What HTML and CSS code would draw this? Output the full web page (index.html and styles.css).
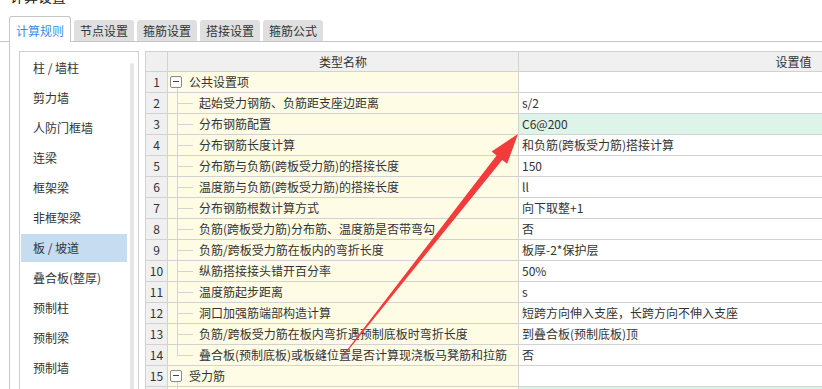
FILE: index.html
```html
<!DOCTYPE html>
<html lang="zh-CN">
<head>
    <meta charset="UTF-8">
    <meta name="viewport" content="width=device-width, initial-scale=1.0">
    <title>计算设置</title>
    <link rel="stylesheet" href="styles.css">
</head>
<body>
    <div class="title">计算设置</div>

    <div class="tabs">
        <div class="tab active">计算规则</div>
        <div class="tab">节点设置</div>
        <div class="tab">箍筋设置</div>
        <div class="tab">搭接设置</div>
        <div class="tab">箍筋公式</div>
    </div>

    <div class="panel">
        <div class="side">
            <ul class="side-list">
                <li>柱 / 墙柱</li>
                <li>剪力墙</li>
                <li>人防门框墙</li>
                <li>连梁</li>
                <li>框架梁</li>
                <li>非框架梁</li>
                <li class="selected">板 / 坡道</li>
                <li>叠合板(整厚)</li>
                <li>预制柱</li>
                <li>预制梁</li>
                <li>预制墙</li>
            </ul>
            <div class="side-scroll"></div>
        </div>

        <div class="sheet">
            <div class="row head">
                <div class="cell num"></div>
                <div class="cell">类型名称</div>
                <div class="cell">设置值</div>
            </div>
            <div class="row">
                <div class="cell num">1</div>
                <div class="cell name group"><span class="toggle"></span>公共设置项</div>
                <div class="cell val"></div>
            </div>
            <div class="row">
                <div class="cell num">2</div>
                <div class="cell name leaf">起始受力钢筋、负筋距支座边距离</div>
                <div class="cell val">s/2</div>
            </div>
            <div class="row">
                <div class="cell num">3</div>
                <div class="cell name leaf">分布钢筋配置</div>
                <div class="cell val current">C6@200</div>
            </div>
            <div class="row">
                <div class="cell num">4</div>
                <div class="cell name leaf">分布钢筋长度计算</div>
                <div class="cell val">和负筋(跨板受力筋)搭接计算</div>
            </div>
            <div class="row">
                <div class="cell num">5</div>
                <div class="cell name leaf">分布筋与负筋(跨板受力筋)的搭接长度</div>
                <div class="cell val">150</div>
            </div>
            <div class="row">
                <div class="cell num">6</div>
                <div class="cell name leaf">温度筋与负筋(跨板受力筋)的搭接长度</div>
                <div class="cell val">ll</div>
            </div>
            <div class="row">
                <div class="cell num">7</div>
                <div class="cell name leaf">分布钢筋根数计算方式</div>
                <div class="cell val">向下取整+1</div>
            </div>
            <div class="row">
                <div class="cell num">8</div>
                <div class="cell name leaf">负筋(跨板受力筋)分布筋、温度筋是否带弯勾</div>
                <div class="cell val">否</div>
            </div>
            <div class="row">
                <div class="cell num">9</div>
                <div class="cell name leaf">负筋/跨板受力筋在板内的弯折长度</div>
                <div class="cell val">板厚-2*保护层</div>
            </div>
            <div class="row">
                <div class="cell num">10</div>
                <div class="cell name leaf">纵筋搭接接头错开百分率</div>
                <div class="cell val">50%</div>
            </div>
            <div class="row">
                <div class="cell num">11</div>
                <div class="cell name leaf">温度筋起步距离</div>
                <div class="cell val">s</div>
            </div>
            <div class="row">
                <div class="cell num">12</div>
                <div class="cell name leaf">洞口加强筋端部构造计算</div>
                <div class="cell val">短跨方向伸入支座，长跨方向不伸入支座</div>
            </div>
            <div class="row">
                <div class="cell num">13</div>
                <div class="cell name leaf">负筋/跨板受力筋在板内弯折遇预制底板时弯折长度</div>
                <div class="cell val">到叠合板(预制底板)顶</div>
            </div>
            <div class="row">
                <div class="cell num">14</div>
                <div class="cell name leaf last">叠合板(预制底板)或板缝位置是否计算现浇板马凳筋和拉筋</div>
                <div class="cell val">否</div>
            </div>
            <div class="row">
                <div class="cell num">15</div>
                <div class="cell name group"><span class="toggle"></span>受力筋</div>
                <div class="cell val"></div>
            </div>
            <div class="row">
                <div class="cell num"></div>
                <div class="cell name leaf"></div>
                <div class="cell val next"></div>
            </div>
        </div>
    </div>

    <!-- annotation arrow drawn over the screenshot -->
    <svg class="arrow" width="822" height="389" viewBox="0 0 822 389">
        <polygon points="342.6,355.7 496.6,155.4 491.6,151.4 518,134 507.2,163.8 502.2,159.9 343.4,356.3" fill="#f23c3c"/>
    </svg>
</body>
</html>
```

FILE: styles.css
```css
* {
    margin: 0;
    padding: 0;
    box-sizing: border-box;
    font-family: "Noto Sans CJK SC", "Microsoft YaHei", sans-serif;
}

body {
    position: relative;
    width: 822px;
    height: 389px;
    overflow: hidden;
    background: #fff;
    color: #333;
    font-size: 12px;
}

.title {
    height: 16px;
    margin: -12px 0 12px;
    padding-left: 10px;
    font-size: 14px;
    line-height: 16px;
    color: #222;
}

/* tab bar */
.tabs {
    display: flex;
    align-items: flex-end;
    gap: 3px;
    height: 26px;
    padding-left: 9px;
    border-bottom: 1px solid #c6c6c6;
}

.tab {
    width: 60px;
    height: 21px;
    line-height: 21px;
    text-align: center;
    background: #dfdfdf;
    border-radius: 3px 3px 0 0;
    color: #333;
}

.tab.active {
    width: 62px;
    height: 26px;
    margin-bottom: -1px;
    padding-top: 3px;
    line-height: 22px;
    background: #fff;
    border: 1px solid #c6c6c6;
    border-bottom: none;
    color: #3a8ee6;
}

/* body of the dialog */
.panel {
    display: flex;
    gap: 6px;
    height: 347px;
    margin-left: 9px;
    padding: 9px 0 0 9px;
    border-left: 1px solid #c8c8c8;
}

.side {
    flex: none;
    display: flex;
    width: 120px;
    border: 1px solid #cfcfcf;
    border-bottom: none;
    background: #fff;
}

.side-list {
    flex: 1;
    list-style: none;
    padding: 1px 1px 0 1px;
}

.side-list li {
    height: 28px;
    margin: 1px 0 2px;
    padding-left: 12px;
    line-height: 28px;
    color: #333;
}

.side-list li.selected {
    background: #c5dcf1;
}

.side-scroll {
    flex: none;
    width: 4px;
    margin: 11px 4px 0 2px;
    background: #e6e6e6;
    border-radius: 2px 2px 0 0;
}

/* settings grid */
.sheet {
    flex: none;
    width: 924px;
    border-left: 1px solid #d2d2d2;
    border-top: 1px solid #d2d2d2;
}

.row {
    display: grid;
    grid-template-columns: 22px 351px 550px;
    height: 21px;
}

.cell {
    border-right: 1px solid #d2d2d2;
    border-bottom: 1px solid #d2d2d2;
    line-height: 20px;
    white-space: nowrap;
    overflow: hidden;
}

.head {
    height: 20px;
    background: #f0f0f0;
}

.head .cell {
    line-height: 19px;
    text-align: center;
}

.num {
    background: #f0f0f0;
    text-align: center;
}

.name {
    padding-left: 31px;
    background: #fffce6;
}

.name.group {
    display: flex;
    align-items: center;
    gap: 7px;
    padding-left: 2px;
    background:
        linear-gradient(#d4d4d4, #d4d4d4) 9px 16px / 1px 4px no-repeat,
        #fffce6;
}

.toggle {
    position: relative;
    width: 12px;
    height: 12px;
    border: 1px solid #8a8a8a;
    border-radius: 2px;
    background: #fff;
}

.toggle::before {
    content: "";
    position: absolute;
    left: 2px;
    top: 4px;
    width: 6px;
    height: 1px;
    background: #444;
}

.name.leaf {
    background:
        linear-gradient(#d4d4d4, #d4d4d4) 9px 0 / 1px 100% no-repeat,
        linear-gradient(#d4d4d4, #d4d4d4) 9px 10px / 16px 1px no-repeat,
        #fffce6;
}

.name.leaf.last {
    background:
        linear-gradient(#d4d4d4, #d4d4d4) 9px 0 / 1px 11px no-repeat,
        linear-gradient(#d4d4d4, #d4d4d4) 9px 10px / 16px 1px no-repeat,
        #fffce6;
}

.val {
    padding-left: 3px;
    background: #fff;
}

.val.current,
.val.next {
    background: #ddf4e9;
}

.arrow {
    position: absolute;
    left: 0;
    top: 0;
    pointer-events: none;
}
```
